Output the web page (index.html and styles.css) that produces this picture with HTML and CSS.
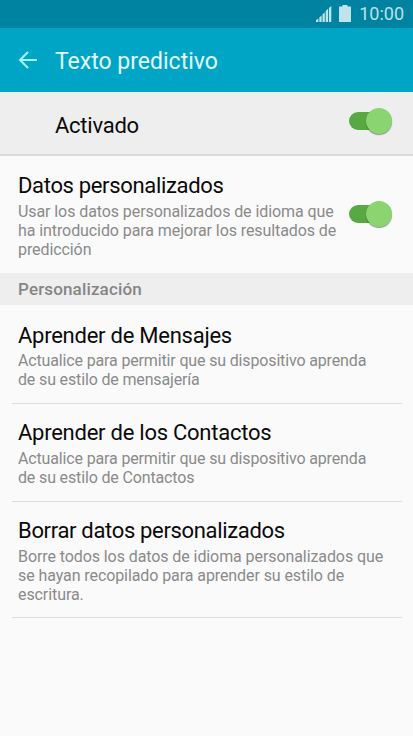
FILE: index.html
```html
<!DOCTYPE html>
<html lang="es">
<head>
<meta charset="utf-8">
<title>Texto predictivo</title>
<link rel="stylesheet" href="styles.css">
</head>
<body>
<div class="status">
  <svg class="signal" width="16" height="16" viewBox="0 0 16 16"><path d="M0 14l2.300-1.500V16H0zM3.300 11.500l2.300-2V16H3.300zM6.500 8.500l2.300-2.300V16H6.500zM9.700 5L12 2.700V16H9.700zM12.900 2L15.300 0v16h-2.400z"/></svg>
  <svg class="battery" width="12" height="17" viewBox="0 0 12 17"><path d="M3.500 0h5v1.500H12V17H0V1.500h3.500z"/></svg>
  <span class="clock">10:00</span>
</div>
<header class="bar">
  <svg class="back" width="20" height="18" viewBox="0 0 20 18"><path d="M10 1L2 9l8 8M2 9h17"/></svg>
  <h1><span>Texto predictivo</span></h1>
</header>
<main>
  <section class="master"><h2><span>Activado</span></h2><i class="toggle"></i></section>
  <section class="row first">
    <div><h2 class="tight"><span>Datos personalizados</span></h2>
    <p><span>Usar los datos personalizados de idioma que</span><br><span>ha introducido para mejorar los resultados de</span><br><span>predicción</span></p></div>
    <i class="toggle"></i>
  </section>
  <h3><span>Personalización</span></h3>
  <section class="item learn"><h2><span>Aprender de Mensajes</span></h2><p class="tight"><span>Actualice para permitir que su dispositivo aprenda</span><br><span>de su estilo de mensajería</span></p></section>
  <section class="item"><h2><span>Aprender de los Contactos</span></h2><p class="tight"><span>Actualice para permitir que su dispositivo aprenda</span><br><span>de su estilo de Contactos</span></p></section>
  <section class="item last"><h2 class="tight"><span>Borrar datos personalizados</span></h2><p><span>Borre todos los datos de idioma personalizados que</span><br><span>se hayan recopilado para aprender su estilo de</span><br><span>escritura.</span></p></section>
</main>
</body>
</html>
```
FILE: styles.css
```css
* { box-sizing: border-box; margin: 0; padding: 0; }
body { width: 413px; height: 736px; overflow: hidden; background: #fafafa; font-family: Roboto, "Liberation Sans", sans-serif; color: #0a0a0a; }
.status { height: 28px; background: #0083a0; display: flex; align-items: center; justify-content: flex-end; padding-right: 9px; color: #b9e2ea; }
.status svg { fill: #bfe4eb; }
.battery { margin: 0 8px 2px 7px; }
.clock { font-size: 18px; line-height: 28px; }
.bar { height: 64px; background: #00a5c6; display: flex; align-items: center; padding: 2px 0 0 18px; color: #e2fbff; }
.back { fill: none; stroke: #a2f5fa; stroke-width: 2; margin: -2px 17px 0 0; }
h1 { font-size: 23px; font-weight: 400; line-height: 28px; padding-top: 1px; }
h2 { font-size: 22px; font-weight: 400; line-height: 28px; letter-spacing: -.25px; white-space: nowrap; }
h2.tight { letter-spacing: -.33px; }
p { font-size: 16px; line-height: 19px; padding-top: 2px; letter-spacing: -.085px; color: #8a8a8a; white-space: nowrap; }
p.tight { letter-spacing: -.15px; }
.master { height: 64px; background: #eee; border-bottom: 2px solid #dadada; display: flex; justify-content: space-between; padding: 20px 20px 0 55px; }
.master .toggle { margin-top: -5px; }
.row { height: 117px; display: flex; justify-content: space-between; padding: 16px 20px 0 18px; }
.first .toggle { margin-top: 28px; }
.toggle { position: relative; width: 44px; height: 28px; display: flex; justify-content: flex-end; align-items: center; }
.toggle::after { content: ""; position: absolute; left: 0; top: 5px; width: 34px; height: 18px; border-radius: 9px; background: #58a944; }
.toggle::before { content: ""; position: relative; z-index: 1; width: 26px; height: 26px; margin-right: 1px; border-radius: 50%; background: #8ad570; box-shadow: 0 1px 1px #0006; }
h3 { height: 32px; background: #eee; font-size: 17px; font-weight: 500; line-height: 32px; padding: 0 0 0 18px; letter-spacing: .15px; color: #858585; }
.item { height: 98px; margin: 0 11px 0 12px; padding: 15px 6px 0; border-bottom: 1px solid #ddd; }
.learn { height: 99px; padding-top: 16px; }
.learn h2 { padding-top: 1px; }
.learn p { padding-top: 1px; }
.last { height: 116px; }
```
